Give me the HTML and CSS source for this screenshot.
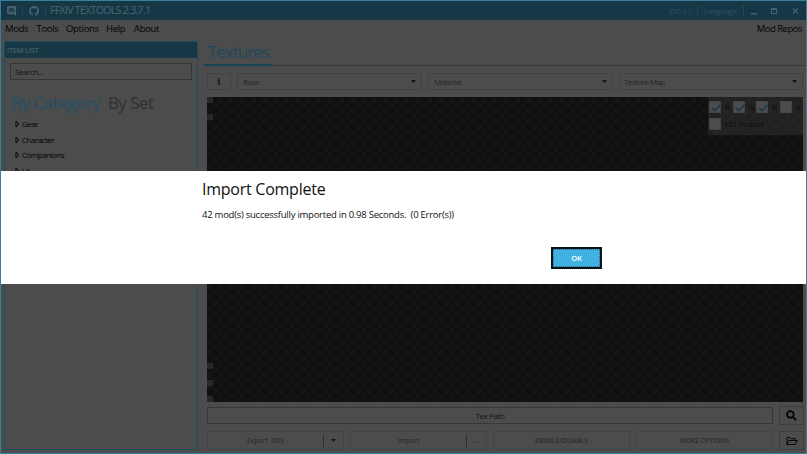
FILE: index.html
```
<!DOCTYPE html>
<html lang="en">
<head>
<meta charset="utf-8">
<title>FFXIV TexTools</title>
<link rel="stylesheet" href="styles.css">
</head>
<body>
<div class="window">
  <header class="titlebar">
    <svg class="discord" viewBox="0 0 10 11"><path fill-rule="evenodd" d="M1 0h8l1 1v10L8 9H1L0 8V1zM2 3v4h1l1-1h2l1 1h1V3L6 2.500H4zM3 4h1.300v1.300H3zM5.700 4H7v1.300H5.700z"/></svg>
    <i class="sep"></i>
    <svg class="github" viewBox="0 0 16 16"><path d="M8 0C3.580 0 0 3.580 0 8c0 3.540 2.290 6.530 5.470 7.590.4.070.55-.17.55-.38v-1.490c-2.010.37-2.530-.49-2.690-.94-.09-.23-.48-.94-.82-1.130-.28-.15-.68-.52-.01-.53.63-.01 1.080.58 1.230.82.72 1.210 1.870.87 2.330.66.07-.52.28-.87.51-1.070-1.780-.2-3.640-.89-3.640-3.950 0-.87.31-1.590.82-2.150-.08-.2-.36-1.020.08-2.120 0 0 .67-.21 2.200.82a7.500 7.500 0 0 1 4 0c1.530-1.040 2.200-.82 2.200-.82.44 1.100.16 1.920.08 2.120.51.56.82 1.270.82 2.150 0 3.070-1.870 3.750-3.650 3.950.29.25.54.73.54 1.480v2.200c0 .21.15.46.55.38A8 8 0 0 0 8 0z"/></svg>
    <i class="sep"></i>
    <span class="app-name">FFXIV TEXTOOLS 2.3.7.1</span>
    <span class="dx">DX: 11</span><i class="sep"></i><span class="lang">Language</span><i class="sep"></i>
    <svg class="controls" viewBox="0 0 50 10"><path d="M1 7h6v1.500H1z"/><path fill-rule="evenodd" d="M21 2h6v6h-6zM22 4v3h4V4z"/><path d="M43 2.500l5 5m0-5l-5 5" fill="none" stroke="#47616c" stroke-width="1.200"/></svg>
  </header>
  <nav class="menu"><span class="m1">Mods</span><span class="m2">Tools</span><span class="m3">Options</span><span class="m4">Help</span><span class="m5">About</span><span class="repos">Mod Repos</span></nav>
  <main>
    <aside class="items">
      <h2>ITEM LIST</h2>
      <div class="search">Search...</div>
      <div class="tabs"><span class="active">By Category</span><span>By Set</span></div>
      <ul>
        <li><svg viewBox="0 0 5 8"><path d="M1 1v6l3-3z"/></svg>Gear</li>
        <li><svg viewBox="0 0 5 8"><path d="M1 1v6l3-3z"/></svg>Character</li>
        <li><svg viewBox="0 0 5 8"><path d="M1 1v6l3-3z"/></svg>Companions</li>
        <li><svg viewBox="0 0 5 8"><path d="M1 1v6l3-3z"/></svg>UI</li>
      </ul>
    </aside>
    <section class="content">
      <div class="heading"><h1>Textures</h1></div>
      <div class="filters">
        <div class="info">i</div>
        <div class="combo"><span>Race</span><i class="arrow"></i></div>
        <div class="combo"><span>Material</span><i class="arrow"></i></div>
        <div class="combo"><span>Texture Map</span><i class="arrow"></i></div>
      </div>
      <div class="canvas">
        <div class="handles"><div><i></i><i></i></div><div><i></i><i></i><i></i></div></div>
        <div class="channels">
          <div class="row"><b class="on"></b><span>R</span><b class="on"></b><span>G</span><b class="on"></b><span>B</span><b></b><span>A</span></div>
          <div class="row"><b></b><span>HD Texture</span></div>
        </div>
      </div>
      <div class="path-row"><div class="path"><span>Tex Path</span></div>
        <div class="square"><svg viewBox="0 0 12 12"><circle cx="4.800" cy="4.800" r="3.600"/><path d="M7.500 7.500l3.500 3.500"/></svg></div></div>
      <div class="actions">
        <div class="button"><span class="label">Export&nbsp; DDS</span><span class="more"><i class="arrow"></i></span></div>
        <div class="button"><span class="label">Import</span><span class="more">...</span></div>
        <div class="button"><span class="label">ENABLE/DISABLE</span></div>
        <div class="button"><span class="label">MORE OPTIONS</span></div>
        <div class="square"><svg class="folder" viewBox="0 0 12 10"><path d="M1 8.500V1.500h3l1 1.200h4v1.800M1 8.500l2-4h8.300l-2 4z"/></svg></div>
      </div>
    </section>
  </main>
</div>
<div class="dialog">
  <h2><span>Import Complete</span></h2>
  <p>42 mod(s) successfully imported in 0.98 Seconds.&nbsp; (0 Error(s))</p>
  <button><span>OK</span></button>
</div>
</body>
</html>
```

FILE: styles.css
```
* { box-sizing: border-box; }
body { margin: 0; font: 8px/12px "Open Sans", "Noto Sans", sans-serif; color: #0c0c0c; overflow: hidden; }
h1, h2, p, ul { margin: 0; padding: 0; font-weight: 400; }
span { white-space: nowrap; }
.window { width: 807px; height: 454px; background: #4c4c4c; border: 1px solid #387f9b; display: flex; flex-direction: column; }
.titlebar { height: 19px; flex: none; background: #163846; display: flex; align-items: center; padding: 0 6px 0 6px; }
.titlebar svg { fill: #47616c; flex: none; }
.discord { width: 9px; height: 10px; }
.github { width: 10px; height: 10px; }
.sep { width: 1px; height: 11px; background: #254450; margin: 0 6px; flex: none; }
.app-name { font-size: 10.5px; line-height: 14px; width: 103px; letter-spacing: -.66px; color: #4c6670; margin: -2px 0 0 -2px; }
.dx { margin-left: auto; width: 22px; color: #35505c; letter-spacing: -.2px; }
.lang { width: 33px; color: #35505c; letter-spacing: -.4px; }
.controls { width: 50px; height: 10px; }
.menu { height: 21px; flex: none; display: flex; align-items: center; padding: 0 4px 3px 4px; font-size: 9.5px; letter-spacing: -.33px; color: #020202; }
.m1 { width: 31.5px; } .m2 { width: 29.5px; } .m3 { width: 40px; } .m4 { width: 28px; }
.repos { margin-left: auto; letter-spacing: -.5px; }
main { flex: 1; display: flex; min-height: 0; }
.items { width: 194px; height: 409px; margin-left: 3px; border: 1px solid #1d4c61; flex: none; }
.items h2 { height: 16px; background: #163846; color: #5c6b71; font-size: 7.5px; line-height: 16px; padding-left: 2px; letter-spacing: -.2px; }
.search { height: 17px; margin: 5px 5px 0 5px; border: 1px solid #363636; line-height: 15px; padding-left: 4px; font-size: 8px; letter-spacing: -.4px; color: #141414; }
.tabs { margin: 10px 0 0 6px; height: 26px; display: flex; gap: 8px; align-items: center; font-size: 17px; letter-spacing: -.52px; color: #303030; }
.tabs .active { color: #1f5068; }
ul { list-style: none; padding: 0 0 0 10px; }
li { height: 15.7px; display: flex; align-items: center; gap: 2px; font-size: 8px; letter-spacing: -.5px; color: #020202; }
li svg { width: 5px; height: 8px; fill: none; stroke: #050505; stroke-width: 1; }
.content { margin-left: 6px; flex: 1; display: flex; flex-direction: column; min-width: 0; }
.heading { height: 25px; border-bottom: 1px solid #393939; flex: none; }
h1 { width: 68px; height: 25px; border-bottom: 2px solid #154358; color: #20495e; font-size: 17px; letter-spacing: -1px; line-height: 22px; padding-left: 4px; white-space: nowrap; }
.filters { display: grid; grid-template-columns: 24px 185px 185px 184px; gap: 6px; margin: 7px 3px 0 3px; height: 17px; flex: none; }
.info, .combo { border: 1px solid #424242; }
.info { text-align: center; font: bold 10px/15px "DejaVu Serif", serif; color: #202020; }
.combo { display: flex; align-items: center; justify-content: space-between; padding: 0 5px; color: #262626; letter-spacing: -.5px; }
.combo:last-child { letter-spacing: -.6px; padding-left: 4px; }
.arrow { width: 5px; height: 3px; background: #151515; clip-path: polygon(0 0, 100% 0, 50% 100%); }
.canvas { height: 305px; margin: 7px 3px 0 3px; flex: none; display: flex; justify-content: space-between; background: repeating-conic-gradient(#101010 0 25%, #141414 0 50%) 0 0 / 11px 11px; }
.handles { width: 6px; display: flex; flex-direction: column; justify-content: space-between; }
.handles div { display: grid; gap: 10.5px; }
.handles i { height: 6px; background: #282828; }
.channels { width: 95px; height: 38px; background: rgba(60,60,60,.4); padding: 4px 0 0 1px; color: #0d0d0d; letter-spacing: -.3px; }
.row { height: 17px; display: flex; align-items: flex-start; }
.row b { width: 12px; height: 12px; background: #4c4c4c; border: 1px solid #444; flex: none; }
.row b.on::before { content: ""; display: block; width: 8px; height: 4px; border: solid #193c4b; border-width: 0 0 2px 2px; transform: translate(1px, 2px) rotate(-48deg) scale(.85); }
.row span { width: 12.3px; padding-left: 4px; }
.path-row { display: flex; gap: 6px; align-items: center; margin: 3px 2px 0 3px; height: 20px; flex: none; }
.path { flex: 1; height: 17px; border: 1px solid #373737; text-align: center; line-height: 15px; letter-spacing: -.4px; color: #121212; }
.square { width: 25px; height: 19px; border: 1px solid #3e3e3e; display: flex; align-items: center; justify-content: center; flex: none; }
.square svg { width: 11px; height: 11px; fill: none; stroke: #050505; stroke-width: 2; }
.square .folder { width: 12px; height: 10px; stroke-width: 1; }
.actions { display: flex; gap: 6px; margin: 6px 2px 0 3px; height: 19px; flex: none; }
.button { flex: 1; border: 1px solid #434343; display: flex; align-items: center; font-size: 6.5px; font-weight: 600; color: #2d2d2d; }
.label { flex: 1; text-align: center; }
.more { width: 20px; height: 12px; border-left: 1px solid #2c2c2c; display: flex; align-items: center; justify-content: center; }
.dialog { position: absolute; left: 1px; top: 171px; width: 805px; height: 113px; background: #fff; padding: 7px 204px 0 201px; color: #111; }
.dialog h2 { font-size: 16px; letter-spacing: -.25px; line-height: 22px; white-space: nowrap; }
.dialog p { font-size: 9.5px; letter-spacing: -.25px; line-height: 14px; margin-top: 8px; white-space: nowrap; }
button { display: block; margin: 24.5px 0 0 auto; width: 51px; height: 22px; border: 2px solid #06131b; background: #41b1e1; color: #fff; font: 600 7.5px/16px "Open Sans", sans-serif; letter-spacing: -.2px; padding: 0; outline: 1px dotted #236582; outline-offset: -3px; }
```
